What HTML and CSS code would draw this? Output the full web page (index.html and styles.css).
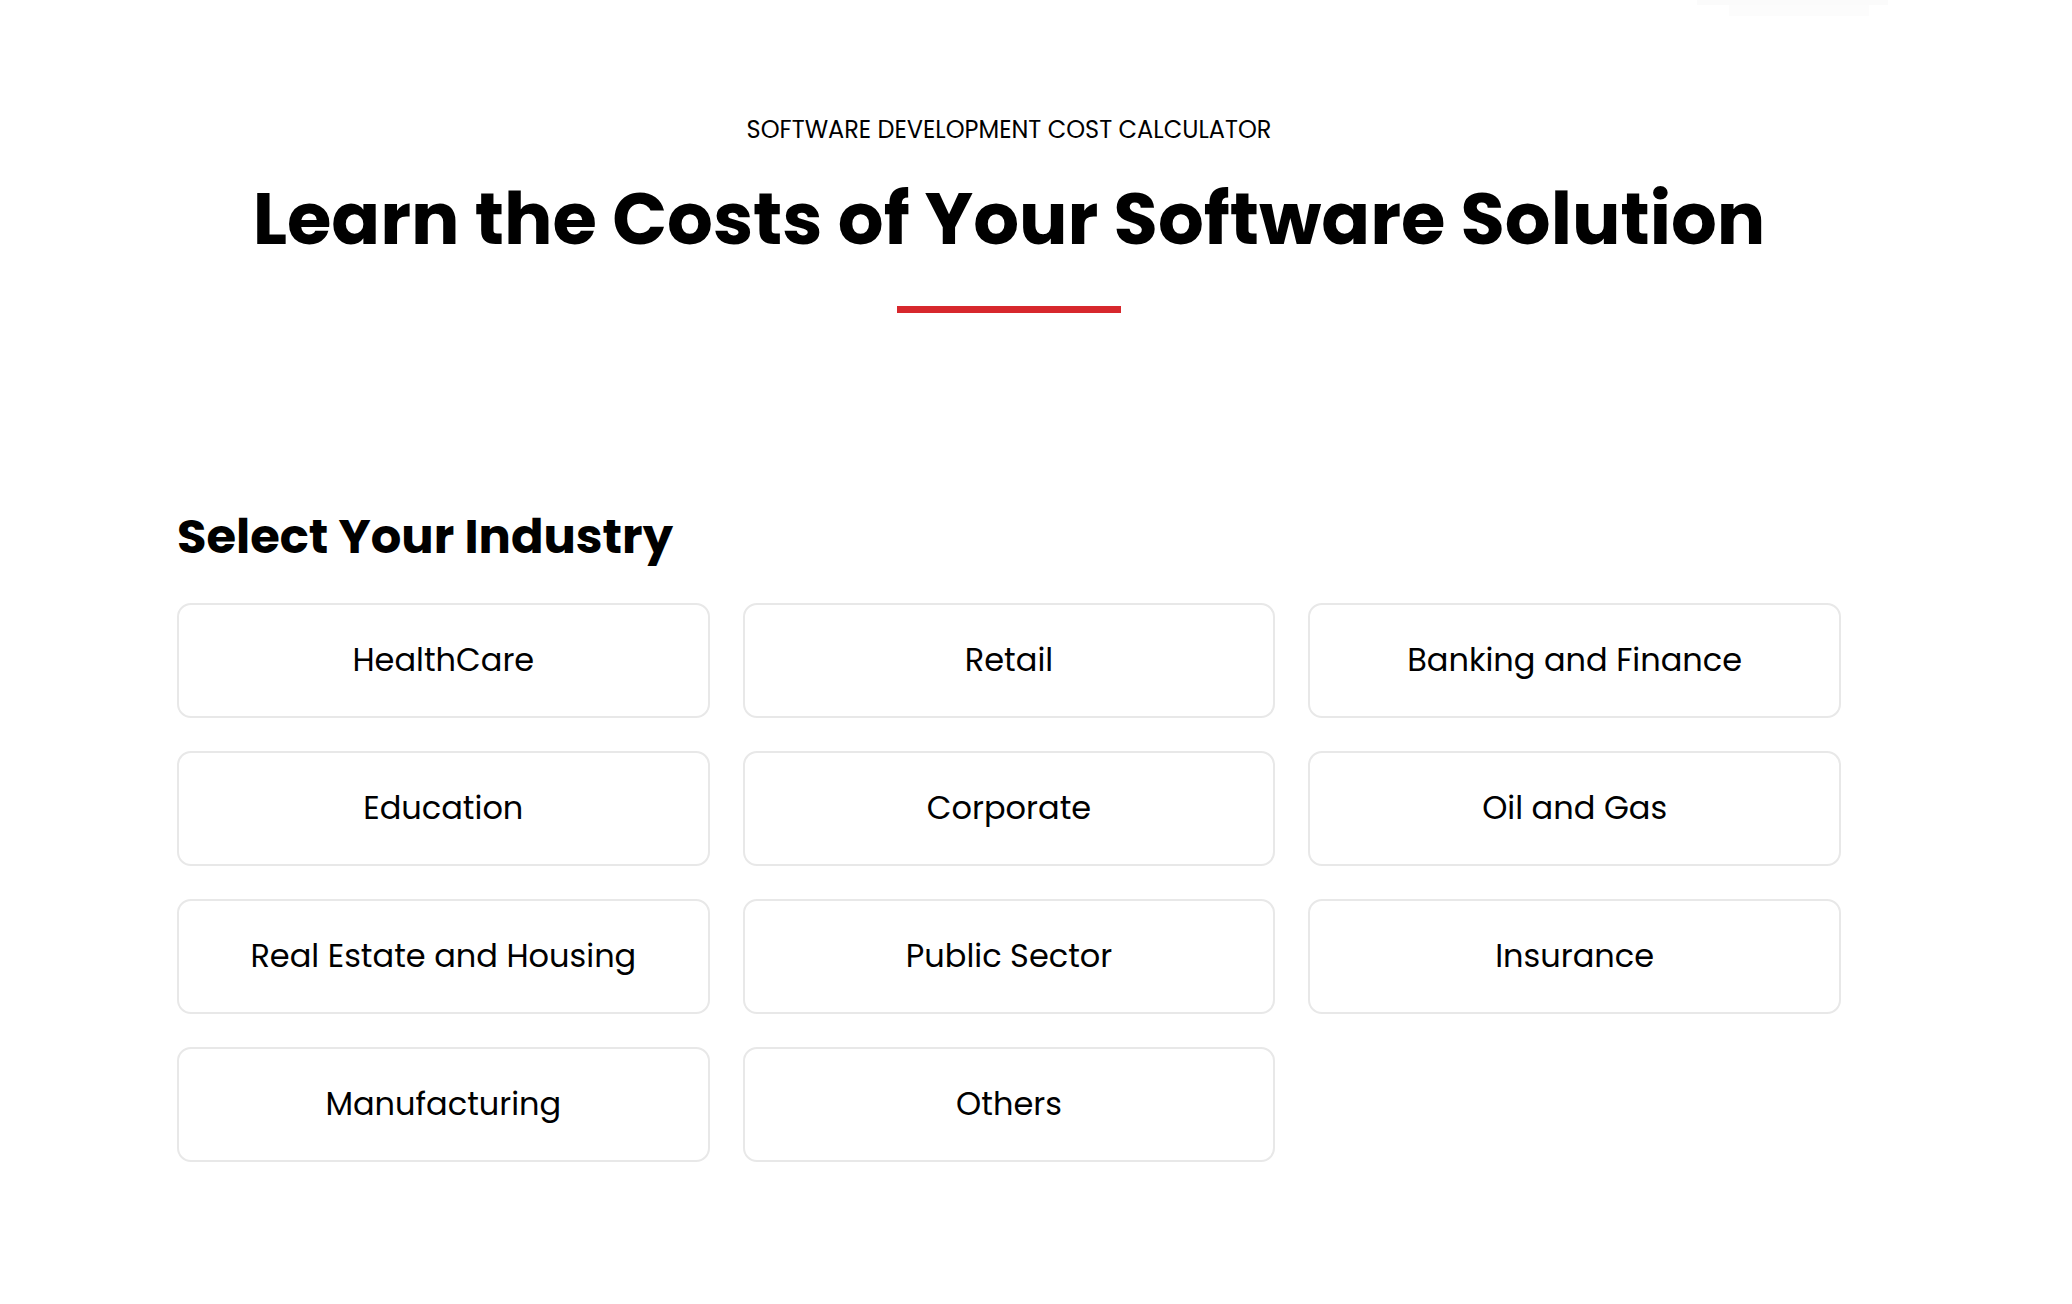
FILE: index.html
```html
<!DOCTYPE html>
<html lang="en">
<head>
    <meta charset="UTF-8">
    <title>Software Development Cost Calculator</title>
    <link rel="stylesheet" href="styles.css">
</head>

<body>
    <div class="top-ghost">
        <div class="top-ghost-bar"></div>
        <div class="top-ghost-tab"></div>
    </div>

    <div class="container">
        <div class="intro">
            <p class="eyebrow">SOFTWARE DEVELOPMENT COST CALCULATOR</p>
            <h1>Learn the Costs of Your Software Solution</h1>
            <span class="divider"></span>
        </div>

        <h2>Select Your Industry</h2>

        <div class="industry-grid">
            <button type="button" class="industry">HealthCare</button>
            <button type="button" class="industry">Retail</button>
            <button type="button" class="industry">Banking and Finance</button>
            <button type="button" class="industry">Education</button>
            <button type="button" class="industry">Corporate</button>
            <button type="button" class="industry">Oil and Gas</button>
            <button type="button" class="industry">Real Estate and Housing</button>
            <button type="button" class="industry">Public Sector</button>
            <button type="button" class="industry">Insurance</button>
            <button type="button" class="industry">Manufacturing</button>
            <button type="button" class="industry">Others</button>
        </div>
    </div>
</body>
</html>
```

FILE: styles.css
```css
body {
    margin: 0;
    background-color: #ffffff;
    color: #000000;
    font-family: "Poppins", "Open Sans", sans-serif;
    position: relative;
}

.top-ghost {
    position: absolute;
    top: 0;
    left: 1697px;
    width: 191px;
}

.top-ghost-bar {
    height: 5px;
    background-color: #fbfbfb;
}

.top-ghost-tab {
    height: 11px;
    margin: 0 19px 0 32px;
    background-color: #fcfcfc;
}

.container {
    width: 1664px;
    margin-left: 177px;
    padding-top: 116px;
    padding-bottom: 120px;
}

.intro {
    display: flex;
    flex-direction: column;
    align-items: center;
    text-align: center;
}

.eyebrow {
    margin: 0;
    font-size: 24px;
    line-height: 1.2;
    font-weight: 400;
}

h1 {
    margin: 31px 0 0;
    font-size: 72px;
    line-height: 1.2;
    font-weight: 700;
}

.divider {
    display: block;
    width: 224px;
    height: 7px;
    margin-top: 44px;
    background-color: #d7282d;
}

h2 {
    margin: 195px 0 0;
    font-size: 48px;
    line-height: 1.2;
    font-weight: 700;
}

.industry-grid {
    display: grid;
    grid-template-columns: repeat(3, 1fr);
    gap: 33px;
    margin-top: 37px;
}

.industry {
    display: flex;
    align-items: center;
    justify-content: center;
    height: 115px;
    box-sizing: border-box;
    background-color: #ffffff;
    border: 2px solid #e8e8e8;
    border-radius: 14px;
    font-family: inherit;
    font-size: 32px;
    color: #000000;
    cursor: pointer;
}

.industry:hover {
    border-color: #d7282d;
}
```
